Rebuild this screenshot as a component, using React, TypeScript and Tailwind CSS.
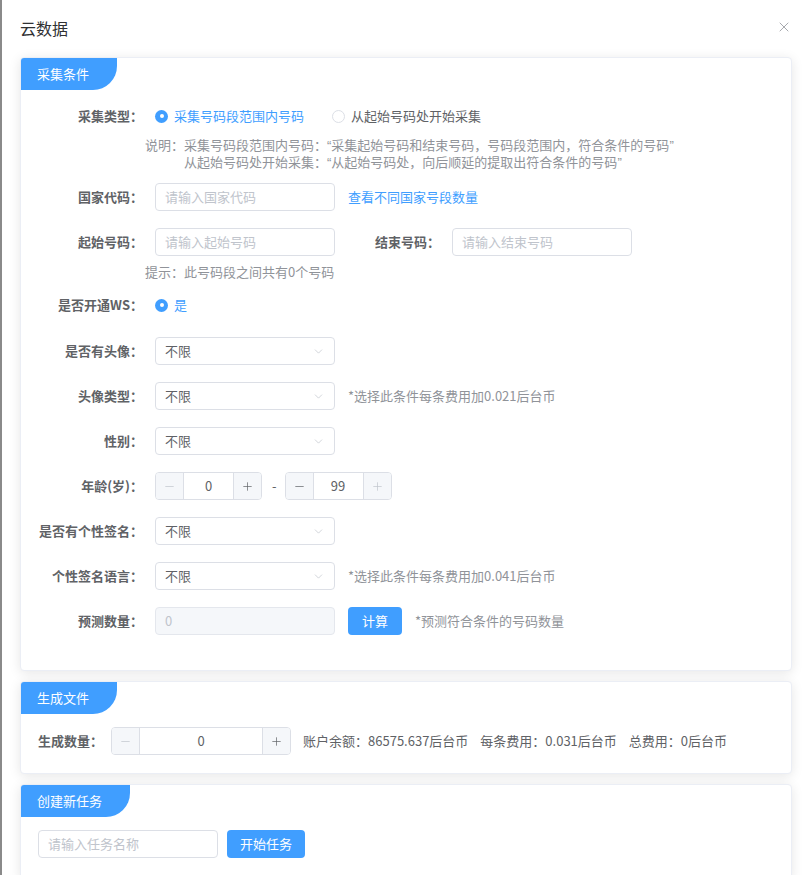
import React from "react";
import { ChevronDown, Minus, Plus, X } from "lucide-react";

type Kids = { children?: React.ReactNode };

const Label = ({ children, w = "w-[120px]" }: Kids & { w?: string }) => (
    <div className={`${w} shrink-0 pr-[12px] text-right font-bold text-[#606266]`}>{children}</div>
);

const Card = ({ title, className = "", children }: Kids & { title: string; className?: string }) => (
    <div className={`overflow-hidden rounded border border-[#ebeef5] bg-white shadow-[0_2px_12px_0_rgba(0,0,0,0.1)] ${className}`}>
        <div className="flex h-[32px] w-fit items-center rounded-br-[24px] bg-[#409eff] pl-[16px] pr-[28px] text-[13px] text-white">
            {title}
        </div>
        {children}
    </div>
);

const Radio = ({ checked, children }: Kids & { checked?: boolean }) => (
    <div className="flex items-center">
        {checked ? (
            <span className="flex h-[13px] w-[13px] items-center justify-center rounded-full bg-[#409eff]">
                <span className="h-[4px] w-[4px] rounded-full bg-white" />
            </span>
        ) : (
            <span className="h-[13px] w-[13px] rounded-full border border-[#dcdfe6] bg-white" />
        )}
        <span className={`ml-[6px] ${checked ? "text-[#409eff]" : "text-[#606266]"}`}>{children}</span>
    </div>
);

const TextInput = ({ placeholder, disabled }: { placeholder: string; disabled?: boolean }) => (
    <div
        className={`flex h-[28px] w-[180px] items-center rounded border border-[#dcdfe6] pl-[9px] text-[#c0c4cc] ${
            disabled ? "bg-[#f5f7fa] border-[#e4e7ed]" : "bg-white"
        }`}
    >
        {placeholder}
    </div>
);

const Select = ({ value = "不限" }: { value?: string }) => (
    <div className="flex h-[28px] w-[180px] items-center justify-between rounded border border-[#dcdfe6] bg-white pl-[9px] pr-[9px] text-[#606266]">
        <span>{value}</span>
        <ChevronDown size={13} strokeWidth={1.3} color="#c0c4cc" />
    </div>
);

const NumInput = ({
    value,
    w,
    minOff,
    maxOff,
}: {
    value: string;
    w: string;
    minOff?: boolean;
    maxOff?: boolean;
}) => (
    <div className={`flex h-[28px] ${w} overflow-hidden rounded border border-[#dcdfe6] bg-white`}>
        <div className="flex w-[28px] items-center justify-center border-r border-[#dcdfe6] bg-[#f5f7fa]">
            <Minus size={13} strokeWidth={1.3} color={minOff ? "#c0c4cc" : "#606266"} />
        </div>
        <div className="flex flex-1 items-center justify-center text-[#606266]">{value}</div>
        <div className="flex w-[28px] items-center justify-center border-l border-[#dcdfe6] bg-[#f5f7fa]">
            <Plus size={13} strokeWidth={1.3} color={maxOff ? "#c0c4cc" : "#606266"} />
        </div>
    </div>
);

const Row = ({ className = "mt-[17px]", children }: Kids & { className?: string }) => (
    <div className={`flex h-[28px] items-center ${className}`}>{children}</div>
);

const Note = ({ children }: Kids) => <span className="ml-[13px] text-[#909399]">{children}</span>;

// narrow latin quotes, like the original
const Q = ({ children }: Kids) => <span className="font-['Liberation_Sans',sans-serif]">{children}</span>;

const App = () => {
    return (
        <div className="flex h-[875px] w-full overflow-hidden bg-white font-['Noto_Sans_CJK_SC','Noto_Sans',sans-serif] text-[13px] leading-[18px]">
            <div className="w-[2px] shrink-0 bg-[#8a8a8a]" />

            <div className="flex-1 pl-[18px] pr-[17px]">
                <div className="flex h-[40px] items-end justify-between">
                    <div className="text-[16px] leading-[24px] text-[#303133]">云数据</div>
                    <X size={16} strokeWidth={1.2} color="#909399" className="mb-[5px]" />
                </div>

                <Card title="采集条件" className="mt-[17px]">
                    <div className="pb-[35px] pl-[14px]">
                        <Row className="mt-[12px]">
                            <Label>采集类型：</Label>
                            <Radio checked>采集号码段范围内号码</Radio>
                            <div className="ml-[28px]">
                                <Radio>从起始号码处开始采集</Radio>
                            </div>
                        </Row>

                        <div className="ml-[110px] mt-[7px] grid w-fit grid-cols-[auto_auto] leading-[16px] text-[#909399]">
                            <span className="text-right">说明：采集号码段范围内号码：</span>
                            <span>
                                <Q>“</Q>采集起始号码和结束号码，号码段范围内，符合条件的号码<Q>”</Q>
                            </span>
                            <span className="text-right">从起始号码处开始采集：</span>
                            <span>
                                <Q>“</Q>从起始号码处，向后顺延的提取出符合条件的号码<Q>”</Q>
                            </span>
                        </div>

                        <Row className="mt-[12px]">
                            <Label>国家代码：</Label>
                            <TextInput placeholder="请输入国家代码" />
                            <span className="ml-[13px] text-[#409eff]">查看不同国家号段数量</span>
                        </Row>

                        <Row>
                            <Label>起始号码：</Label>
                            <TextInput placeholder="请输入起始号码" />
                            <Label w="w-[117px]">结束号码：</Label>
                            <TextInput placeholder="请输入结束号码" />
                        </Row>

                        <div className="ml-[110px] mt-[7px] text-[#909399]">提示：此号码段之间共有0个号码</div>

                        <Row className="mt-[10px]">
                            <Label>是否开通WS：</Label>
                            <Radio checked>是</Radio>
                        </Row>

                        <Row className="mt-[18px]">
                            <Label>是否有头像：</Label>
                            <Select />
                        </Row>

                        <Row>
                            <Label>头像类型：</Label>
                            <Select />
                            <Note>*选择此条件每条费用加0.021后台币</Note>
                        </Row>

                        <Row>
                            <Label>性别：</Label>
                            <Select />
                        </Row>

                        <Row>
                            <Label>年龄(岁)：</Label>
                            <NumInput value="0" w="w-[107px]" minOff />
                            <span className="ml-[10px] mr-[8px] text-[#606266]">-</span>
                            <NumInput value="99" w="w-[107px]" maxOff />
                        </Row>

                        <Row>
                            <Label>是否有个性签名：</Label>
                            <Select />
                        </Row>

                        <Row>
                            <Label>个性签名语言：</Label>
                            <Select />
                            <Note>*选择此条件每条费用加0.041后台币</Note>
                        </Row>

                        <Row>
                            <Label>预测数量：</Label>
                            <TextInput placeholder="0" disabled />
                            <button className="ml-[13px] flex h-[28px] w-[54px] items-center justify-center rounded bg-[#409eff] text-white">
                                计算
                            </button>
                            <Note>*预测符合条件的号码数量</Note>
                        </Row>
                    </div>
                </Card>

                <Card title="生成文件" className="mt-[10px]">
                    <div className="pb-[18px] pl-[17px]">
                        <Row className="mt-[13px]">
                            <span className="pr-[8px] font-bold text-[#606266]">生成数量：</span>
                            <NumInput value="0" w="w-[180px]" minOff />
                            <div className="ml-[12px] flex gap-[12px] text-[#606266]">
                                <span>账户余额：86575.637后台币</span>
                                <span>每条费用：0.031后台币</span>
                                <span>总费用：0后台币</span>
                            </div>
                        </Row>
                    </div>
                </Card>

                <Card title="创建新任务" className="mt-[10px]">
                    <div className="pb-[20px] pl-[17px]">
                        <Row className="mt-[13px]">
                            <TextInput placeholder="请输入任务名称" />
                            <button className="ml-[9px] flex h-[28px] w-[78px] items-center justify-center rounded bg-[#409eff] text-white">
                                开始任务
                            </button>
                        </Row>
                    </div>
                </Card>
            </div>
        </div>
    );
};

export default App;
